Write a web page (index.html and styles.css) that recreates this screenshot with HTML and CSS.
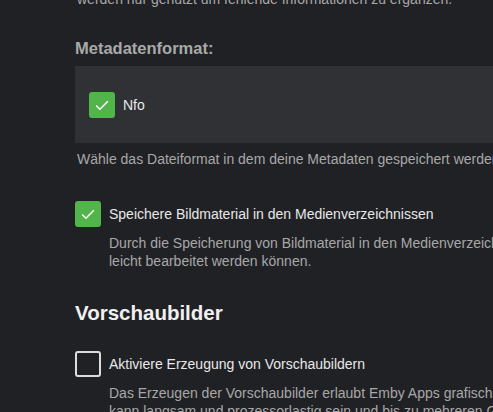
FILE: index.html
```html
<!DOCTYPE html>
<html lang="de">
<head>
<meta charset="utf-8">
<link rel="stylesheet" href="styles.css">
</head>
<body>
<div class="page">
  <div class="content">
    <p class="desc top">werden nur genutzt um fehlende Informationen zu ergänzen.</p>

    <h3 class="label">Metadatenformat:</h3>
    <div class="panel">
      <div class="check-row">
        <span class="box checked"><svg viewBox="0 0 24 24" width="20" height="20"><path d="M5 12.5l4.5 4.5L19 7.5" fill="none" stroke="#fff" stroke-width="1.8"/></svg></span>
        <span class="check-text">Nfo</span>
      </div>
    </div>
    <p class="desc field-desc">Wähle das Dateiformat in dem deine Metadaten gespeichert werden sollen.</p>

    <div class="option first">
      <span class="box checked"><svg viewBox="0 0 24 24" width="20" height="20"><path d="M5 12.5l4.5 4.5L19 7.5" fill="none" stroke="#fff" stroke-width="1.8"/></svg></span>
      <div class="option-body">
        <div class="check-text">Speichere Bildmaterial in den Medienverzeichnissen</div>
        <div class="desc">Durch die Speicherung von Bildmaterial in den Medienverzeichnissen können diese<br>leicht bearbeitet werden können.</div>
      </div>
    </div>

    <h2 class="section-title">Vorschaubilder</h2>

    <div class="option second">
      <span class="box"></span>
      <div class="option-body">
        <div class="check-text">Aktiviere Erzeugung von Vorschaubildern</div>
        <div class="desc">Das Erzeugen der Vorschaubilder erlaubt Emby Apps grafische Vorschauen anzuzeigen. Dieser Prozess<br>kann langsam und prozessorlastig sein und bis zu mehreren Gigabyte Speicherplatz benötigen.</div>
      </div>
    </div>
  </div>
</div>
</body>
</html>
```

FILE: styles.css
```css
html, body {
  margin: 0;
  padding: 0;
  background: #202125;
  overflow: hidden;
  width: 493px;
  height: 412px;
}
body {
  font-family: "Liberation Sans", Arial, sans-serif;
  color: #e6e6e6;
}
.page {
  padding-left: 75px;
  margin-top: -10px;
}
.content {
  width: 700px;
}
.desc {
  font-size: 14px;
  line-height: 18px;
  color: #a8a8a8;
  margin: 0;
  white-space: nowrap;
}
.top {
  margin-left: 2px;
}
.label {
  font-size: 16.5px;
  font-weight: bold;
  color: #a9a9a9;
  margin: 30px 0 0 0;
  line-height: 20px;
}
.panel {
  background: #303135;
  margin-top: 8px;
  height: 77px;
  display: flex;
  align-items: center;
  padding-left: 14px;
}
.check-row {
  display: flex;
  align-items: center;
  gap: 8px;
}
.box {
  width: 26px;
  height: 26px;
  box-sizing: border-box;
  border-radius: 3px;
  border: 2px solid #dcdcdc;
  display: flex;
  align-items: center;
  justify-content: center;
  flex: none;
}
.box.checked {
  background: #52b54b;
  border-color: #52b54b;
}
.check-text {
  font-size: 14px;
  line-height: 18px;
  color: #e8e8e8;
}
.field-desc {
  margin-top: 7px;
  margin-left: 2px;
}
.option {
  display: flex;
  gap: 8px;
}
.option.first {
  margin-top: 33px;
}
.option.second {
  margin-top: 24px;
}
.option .check-text {
  margin-top: 4px;
}
.option-body .desc {
  margin-top: 11px;
}
.section-title {
  font-size: 20.5px;
  font-weight: bold;
  color: #f0f0f0;
  margin: 29px 0 0 0;
  line-height: 28px;
}
```
